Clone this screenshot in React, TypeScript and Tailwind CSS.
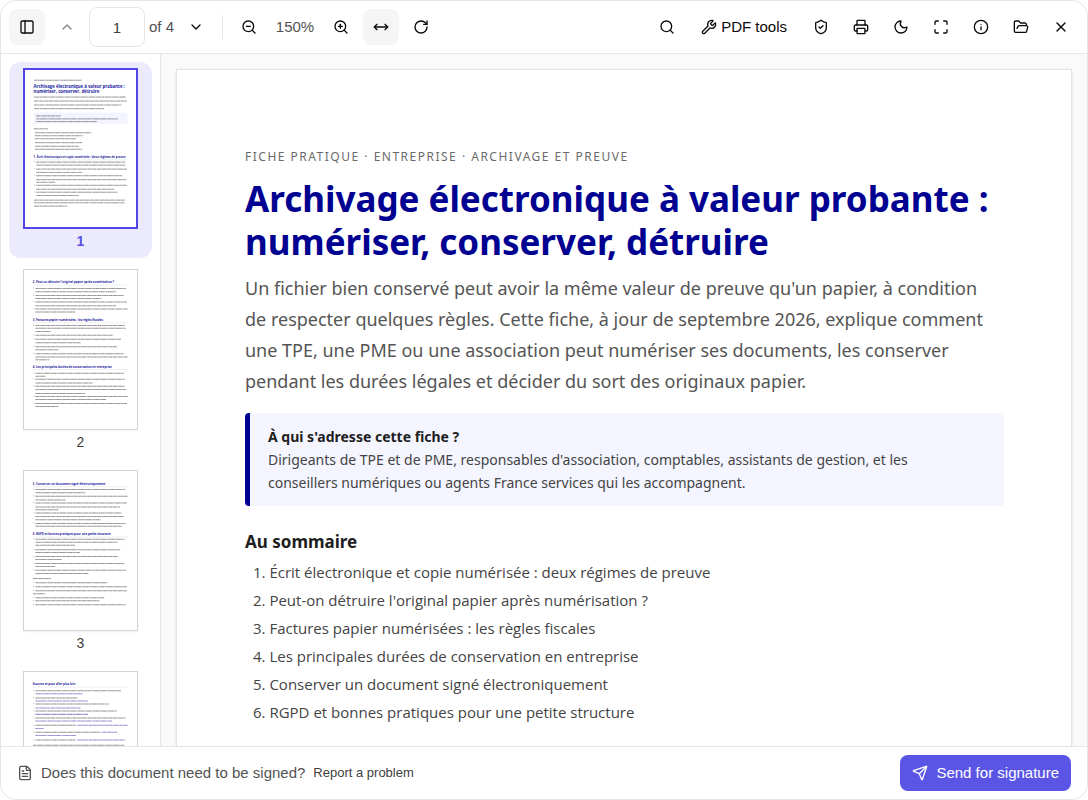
import type { ReactNode } from "react";
import clsx from "clsx";
import {
  ChevronDown,
  ChevronUp,
  FileText,
  FolderOpen,
  Info,
  Maximize,
  Moon,
  MoveHorizontal,
  PanelLeft,
  Printer,
  RotateCw,
  Search,
  Send,
  ShieldCheck,
  Wrench,
  X,
  ZoomIn,
  ZoomOut,
} from "lucide-react";

const sommaire = [
  "Écrit électronique et copie numérisée : deux régimes de preuve",
  "Peut-on détruire l'original papier après numérisation ?",
  "Factures papier numérisées : les règles fiscales",
  "Les principales durées de conservation en entreprise",
  "Conserver un document signé électroniquement",
  "RGPD et bonnes pratiques pour une petite structure",
];

// [y, x start, x end, is a link]
type Line = [number, number, number, boolean?];
type Heading = { y: number; text: string; size?: number; rule?: boolean };
type Preview = { headings: Heading[]; lines: Line[]; bullets: number[] };

const previews: Preview[] = [
  {
    headings: [
      { y: 54, size: 13, text: "Archivage électronique à valeur probante :" },
      { y: 70, size: 13, text: "numériser, conserver, détruire" },
      { y: 266, text: "1. " + sommaire[0], rule: true },
    ],
    lines: [
      [31, 27, 171], [82, 27, 305], [94, 27, 308], [106, 27, 292], [117, 27, 240],
      [139, 34, 108], [148, 34, 281], [156, 34, 218], [178, 27, 69],
      [190, 30, 201], [199, 30, 175], [208, 30, 156], [220, 30, 173], [231, 30, 163], [240, 30, 173],
      [279, 34, 303], [288, 34, 303], [300, 34, 308], [310, 34, 173],
      [320, 34, 295], [332, 34, 306], [340, 34, 92], [349, 34, 308], [361, 34, 270],
      [370, 34, 280], [380, 34, 162], [394, 27, 303], [402, 27, 301], [412, 27, 128],
    ],
    bullets: [279, 300, 320, 349, 370],
  },
  {
    headings: [
      { y: 39, text: "2. " + sommaire[1], rule: true },
      { y: 151, text: "3. " + sommaire[2], rule: true },
      { y: 290, text: "4. " + sommaire[3], rule: true },
    ],
    lines: [
      [55, 34, 304], [65, 34, 274], [76, 34, 297], [85, 34, 230],
      [95, 34, 306], [106, 34, 273], [116, 34, 308], [125, 34, 152],
      [165, 34, 300], [173, 34, 302], [183, 34, 80], [194, 34, 265], [206, 34, 288], [216, 34, 168],
      [228, 34, 277], [237, 34, 102], [249, 34, 297], [259, 34, 308], [267, 34, 75],
      [307, 34, 298], [316, 34, 64], [325, 34, 300], [336, 34, 204], [346, 34, 300],
      [355, 34, 303], [367, 34, 182], [376, 34, 308], [385, 34, 245], [397, 34, 306], [406, 34, 102],
    ],
    bullets: [55, 76, 95, 116, 165, 194, 206, 228, 249, 307, 325, 346, 376, 397],
  },
  {
    headings: [
      { y: 41, text: "5. " + sommaire[4], rule: true },
      { y: 190, text: "6. " + sommaire[5], rule: true },
    ],
    lines: [
      [55, 34, 301], [65, 34, 182], [75, 34, 308], [86, 34, 124], [95, 34, 305], [107, 34, 286],
      [115, 34, 102], [125, 34, 290], [135, 34, 297], [145, 34, 228], [156, 34, 302], [164, 34, 290],
      [203, 34, 299], [212, 34, 278], [221, 34, 152], [234, 34, 286], [242, 34, 166],
      [254, 34, 280], [263, 34, 113], [275, 34, 298], [284, 34, 92], [295, 34, 303], [305, 34, 192],
      [320, 27, 80], [332, 34, 248], [344, 34, 306], [356, 34, 306], [365, 27, 64],
      [377, 34, 240], [386, 34, 224], [398, 34, 302],
    ],
    bullets: [55, 75, 95, 125, 156, 203, 234, 254, 275, 295, 332, 344, 356, 377, 386, 398],
  },
  {
    headings: [{ y: 39, text: "Sources et pour aller plus loin", rule: true }],
    lines: [
      [56, 34, 288], [65, 34, 175, true], [77, 34, 160], [86, 34, 190, true],
      [95, 34, 252], [107, 34, 168, true], [116, 34, 275], [126, 34, 190, true],
      [137, 34, 302], [146, 34, 262, true], [158, 34, 155], [158, 159, 308, true], [168, 34, 58, true],
      [179, 34, 228], [179, 232, 278, true], [189, 34, 156, true], [202, 34, 155], [202, 159, 300, true],
      [218, 27, 298],
    ],
    bullets: [56, 77, 95, 116, 137, 158, 179, 202],
  },
];

const dashes = ["9 2 5 1 13 2 3 2 7 1", "4 1 11 2 6 2 15 1 3 2", "12 2 3 1 8 1 5 2 10 2"];

const Thumbnail = ({ preview }: { preview: Preview }) => (
  <svg viewBox="0 0 336 474" className="block w-full" aria-hidden="true">
    {preview === previews[0] && <rect x="27" y="129" width="283" height="34" fill="#f3f4ff" />}
    {preview.headings.map((h) => (
      <g key={h.text}>
        <text x="26" y={h.y} fontSize={h.size ?? 8.6} fontWeight="700" fill="#1c1ca0">
          {h.text}
        </text>
        {h.rule && <path d={`M27 ${h.y + 6}H310`} stroke="#dddff0" strokeWidth="1.5" />}
      </g>
    ))}
    {preview.lines.map(([y, from, to, link], i) => (
      <g key={i} stroke={link ? "#3a2fae" : "#3a3a3a"}>
        <path d={`M${from} ${y}H${to}`} strokeWidth="3" strokeOpacity="0.2" />
        <path d={`M${from} ${y}H${to}`} strokeWidth="3" strokeOpacity="0.4" strokeDasharray={dashes[i % 3]} />
      </g>
    ))}
    {preview.bullets.map((y) => (
      <path key={y} d={`M27 ${y - 1}h3`} stroke="#999" strokeWidth="2" />
    ))}
  </svg>
);

type IconButtonProps = { label: string; active?: boolean; disabled?: boolean; children: ReactNode };

const IconButton = ({ label, active, disabled, children }: IconButtonProps) => (
  <button
    type="button"
    aria-label={label}
    disabled={disabled}
    className={clsx(
      "flex size-9 shrink-0 items-center justify-center rounded-lg",
      active && "bg-neutral-100",
      disabled && "opacity-50",
    )}
  >
    {children}
  </button>
);

const Toolbar = () => (
  <header className="flex h-[53px] shrink-0 items-center justify-between border-b border-neutral-200 px-2 text-[15px] text-neutral-950">
    <div className="flex items-center gap-1">
      <IconButton label="Toggle sidebar" active>
        <PanelLeft size={16} />
      </IconButton>
      <IconButton label="Previous page" disabled>
        <ChevronUp size={16} />
      </IconButton>
      <input
        aria-label="Page number"
        defaultValue="1"
        className="h-10 w-14 rounded-lg border border-neutral-200 text-center text-neutral-700"
      />
      <span className="text-neutral-600">of 4</span>
      <IconButton label="Next page">
        <ChevronDown size={16} />
      </IconButton>
      <div className="mx-1 h-6 w-px bg-neutral-200" />
      <IconButton label="Zoom out">
        <ZoomOut size={16} />
      </IconButton>
      <span className="w-12 text-center text-neutral-600">150%</span>
      <IconButton label="Zoom in">
        <ZoomIn size={16} />
      </IconButton>
      <IconButton label="Fit to width" active>
        <MoveHorizontal size={16} />
      </IconButton>
      <IconButton label="Rotate">
        <RotateCw size={16} />
      </IconButton>
    </div>

    <div className="flex items-center gap-1">
      <IconButton label="Search">
        <Search size={16} />
      </IconButton>
      <button type="button" className="flex h-9 items-center gap-1 rounded-lg px-3">
        <Wrench size={16} /> PDF tools
      </button>
      <IconButton label="Security">
        <ShieldCheck size={16} />
      </IconButton>
      <IconButton label="Print">
        <Printer size={16} />
      </IconButton>
      <IconButton label="Dark mode">
        <Moon size={16} />
      </IconButton>
      <IconButton label="Full screen">
        <Maximize size={16} />
      </IconButton>
      <IconButton label="Information">
        <Info size={16} />
      </IconButton>
      <IconButton label="Open file">
        <FolderOpen size={16} />
      </IconButton>
      <IconButton label="Close">
        <X size={16} />
      </IconButton>
    </div>
  </header>
);

const Sidebar = () => (
  <aside className="flex w-40 shrink-0 flex-col gap-[5px] overflow-hidden border-r border-neutral-200 px-2 pt-2">
    {previews.map((preview, i) => {
      const selected = i === 0;
      return (
        <button
          key={i}
          type="button"
          className={clsx(
            "flex h-[196px] shrink-0 flex-col rounded-xl px-3.5 pt-1.5 text-center text-sm",
            selected ? "bg-[#ecebfd] font-bold text-[#5b4fe0]" : "text-neutral-700",
          )}
        >
          <span
            className={clsx(
              "block w-full bg-white font-['Open_Sans',sans-serif]",
              selected ? "border-2 border-[#4f46e5]" : "border border-neutral-300 shadow-xs",
            )}
          >
            <Thumbnail preview={preview} />
          </span>
          <span className="mt-0.5 w-full leading-5">{i + 1}</span>
        </button>
      );
    })}
  </aside>
);

const DocumentPage = () => (
  <article className="border border-neutral-200 bg-white pt-[79px] pr-[67px] pb-40 pl-[68px] font-['Noto_Sans',sans-serif] text-[#444444] shadow-sm">
    <p className="text-xs leading-4 tracking-[1.5px] text-[#6b6b6b] uppercase">
      Fiche pratique · Entreprise · Archivage et preuve
    </p>
    <h1 className="mt-3 text-[35px] leading-[43px] font-bold text-[#000091]">
      Archivage électronique à valeur probante :<br />
      numériser, conserver, détruire
    </h1>
    <p className="mt-2.5 text-lg leading-[31px] text-[#555555]">
      Un fichier bien conservé peut avoir la même valeur de preuve qu'un papier, à condition
      <br />
      de respecter quelques règles. Cette fiche, à jour de septembre 2026, explique comment
      <br />
      une TPE, une PME ou une association peut numériser ses documents, les conserver
      <br />
      pendant les durées légales et décider du sort des originaux papier.
    </p>
    <div className="mt-4 rounded-sm border-l-5 border-[#000091] bg-[#f4f5ff] py-3 pl-[18px] text-sm leading-[23px]">
      <strong className="block text-[#1e1e1e]">À qui s'adresse cette fiche ?</strong>
      Dirigeants de TPE et de PME, responsables d'association, comptables, assistants de gestion, et les
      <br />
      conseillers numériques ou agents France services qui les accompagnent.
    </div>
    <h2 className="mt-6 text-[17px] leading-6 font-bold text-[#1e1e1e]">Au sommaire</h2>
    <ol className="mt-1 list-inside list-decimal pl-2 font-['Open_Sans',sans-serif] text-[15px] leading-7">
      {sommaire.map((title) => (
        <li key={title}>{title}</li>
      ))}
    </ol>
  </article>
);

const Footer = () => (
  <footer className="flex h-[53px] shrink-0 items-center justify-between border-t border-neutral-200 px-4 text-[15px] text-neutral-600">
    <div className="flex items-center gap-2">
      <FileText size={16} />
      <span>Does this document need to be signed?</span>
      <a href="#report" className="text-[13px] text-neutral-700">
        Report a problem
      </a>
    </div>
    <button type="button" className="flex h-9 items-center gap-2 rounded-lg bg-[#5b55e6] px-3 text-white">
      <Send size={16} /> Send for signature
    </button>
  </footer>
);

export default function App() {
  return (
    <div className="h-screen bg-white font-['Liberation_Sans',Arial,sans-serif]">
      <div className="flex h-full flex-col overflow-hidden rounded-2xl border border-neutral-200">
        <Toolbar />
        <div className="flex min-h-0 flex-1">
          <Sidebar />
          <main className="min-w-0 flex-1 overflow-hidden bg-neutral-50 px-[15px] pt-[15px]">
            <DocumentPage />
          </main>
        </div>
        <Footer />
      </div>
    </div>
  );
}
